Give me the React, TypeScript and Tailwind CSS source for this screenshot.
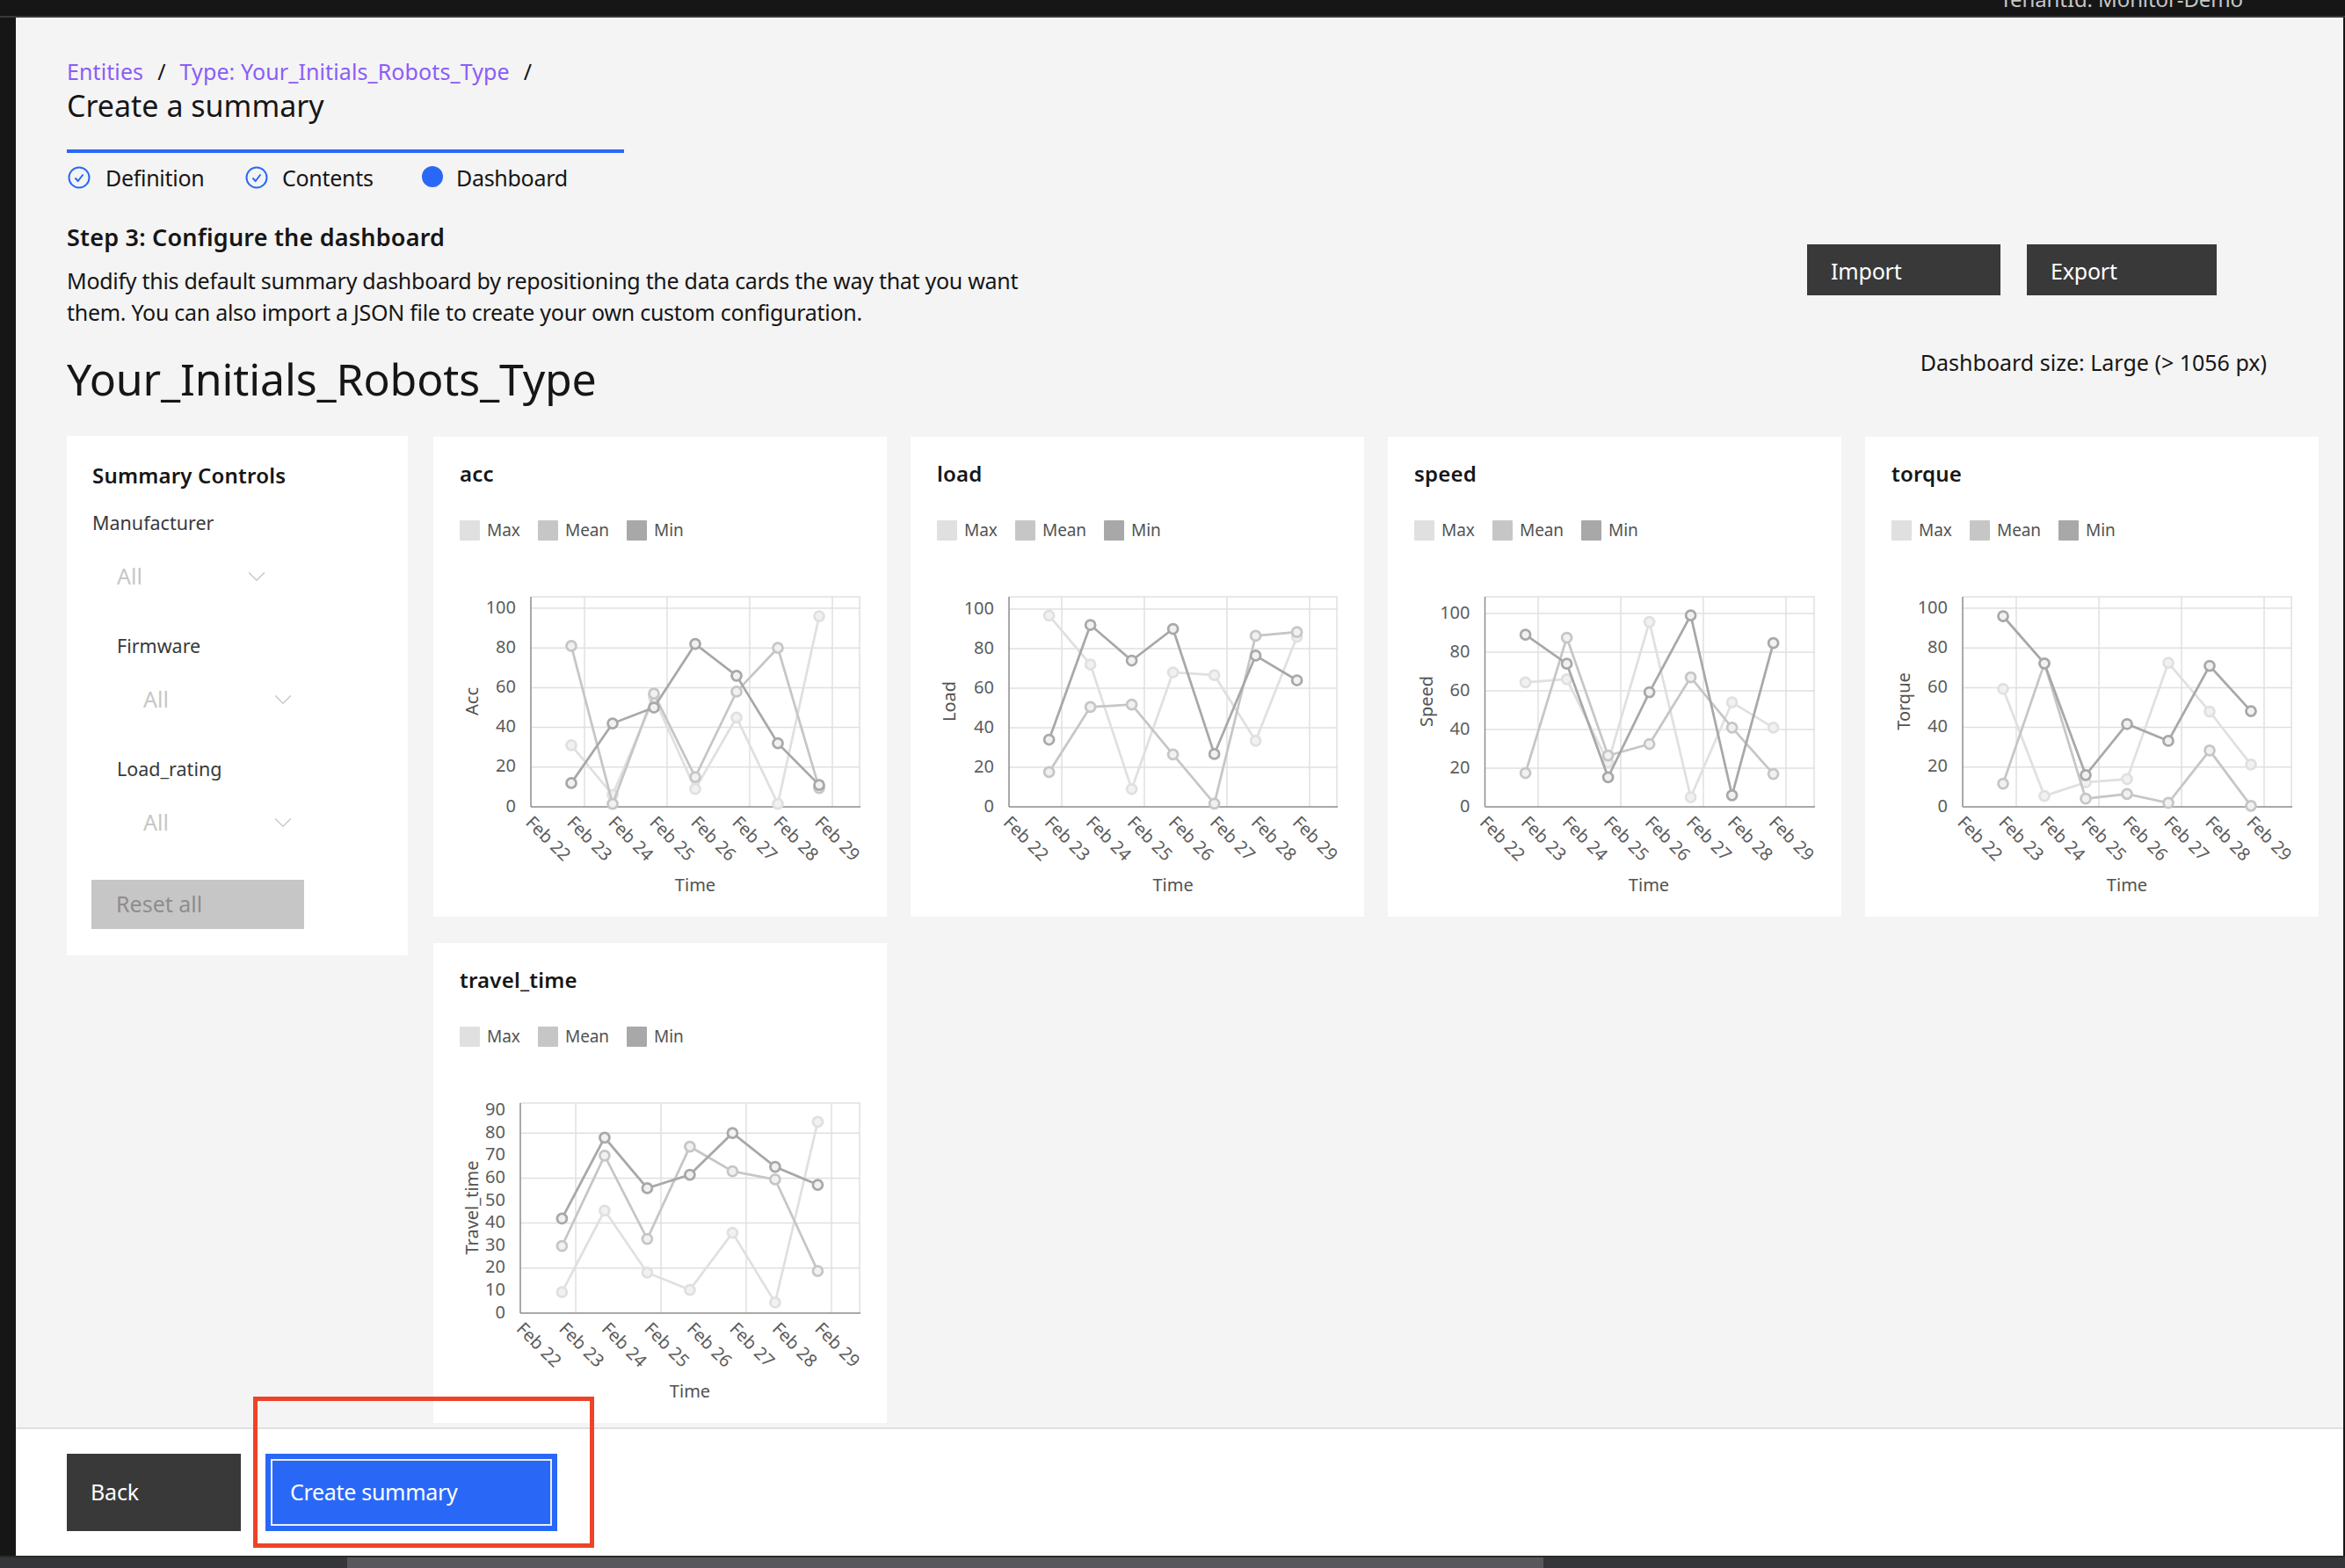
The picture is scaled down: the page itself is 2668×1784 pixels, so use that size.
import React from 'react';
import { ChevronDown } from 'lucide-react';

const DATES = ['Feb 22', 'Feb 23', 'Feb 24', 'Feb 25', 'Feb 26', 'Feb 27', 'Feb 28', 'Feb 29'];
const SERIES_COLORS = ['#e0e0e0', '#c6c6c6', '#a8a8a8'];

interface ChartSpec {
    name: string;
    axis: string;
    left: number;
    y100: number; // pixel row of value 100 (or 90 scale)
    firstX: number;
    stepX: number;
    gridX: number;
    ticks: number[];
    gridTicks: number[];
    timeX: number;
    series: number[][];
}

const BOTTOM = 421;
const RIGHT = 486;
const TOP = 182;

const charts: ChartSpec[] = [
    {
        name: 'acc', axis: 'Acc', left: 111, y100: 195, firstX: 157, stepX: 47, gridX: 172, timeX: 298,
        ticks: [0, 20, 40, 60, 80, 100], gridTicks: [20, 40, 60, 80, 100],
        series: [
            [31, 6, 55, 9, 45, 1.5, 96],
            [81, 1.5, 57, 15, 58, 80, 9.5],
            [12, 42, 50, 82, 66, 32, 11],
        ],
    },
    {
        name: 'load', axis: 'Load', left: 112, y100: 196, firstX: 157.6, stepX: 47, gridX: 172, timeX: 298.6,
        ticks: [0, 20, 40, 60, 80, 100], gridTicks: [20, 40, 60, 80, 100],
        series: [
            [96.7, 72, 9, 68, 66.6, 33.4, 86],
            [17.6, 50.5, 51.7, 26.5, 1.6, 86.5, 88.4],
            [34, 92, 74, 90, 26.7, 76.5, 64],
        ],
    },
    {
        name: 'speed', axis: 'Speed', left: 110.5, y100: 201, firstX: 156.6, stepX: 47, gridX: 171, timeX: 297,
        ticks: [0, 20, 40, 60, 80, 100], gridTicks: [20, 40, 60, 80, 100],
        series: [
            [64.4, 66, 23, 95.6, 5, 54, 41],
            [17.5, 87.5, 26.5, 32.5, 67, 41, 17],
            [89, 74, 15.3, 59.3, 99, 6, 84.7],
        ],
    },
    {
        name: 'torque', axis: 'Torque', left: 111, y100: 195, firstX: 157, stepX: 47, gridX: 172, timeX: 298,
        ticks: [0, 20, 40, 60, 80, 100], gridTicks: [20, 40, 60, 80, 100],
        series: [
            [59.4, 5.5, 12.3, 14, 72.5, 48, 21.3],
            [11.7, 72.2, 4.1, 6.5, 2, 28.4, 0.5],
            [96, 72.2, 16, 41.7, 33.2, 71, 48.2],
        ],
    },
    {
        name: 'travel_time', axis: 'Travel_time', left: 99, y100: 165, firstX: 146.4, stepX: 48.5, gridX: 162, timeX: 292,
        ticks: [0, 10, 20, 30, 40, 50, 60, 70, 80, 90], gridTicks: [20, 40, 60, 80],
        series: [
            [9.3, 45.6, 18, 10.3, 35.7, 4.7, 85],
            [29.8, 70, 33, 74, 63, 59.4, 18.7],
            [42, 78, 55.5, 61.5, 80, 65, 57],
        ],
    },
];

function Chart({ spec }: { spec: ChartSpec }) {
    const perUnit = (BOTTOM - spec.y100) / 100;
    const yOf = (v: number) => BOTTOM - v * perUnit;
    const xOf = (i: number) => spec.firstX + i * spec.stepX;
    const gridXs = [0, 1, 2, 3].map((i) => spec.gridX + i * spec.stepX * 2);

    return (
        <svg width="516" height="546" className="absolute left-0 top-0" fontFamily="'Noto Sans', sans-serif">
            {spec.gridTicks.map((t) => (
                <line key={t} x1={spec.left} x2={RIGHT} y1={yOf(t)} y2={yOf(t)} stroke="#e0e0e0" strokeWidth="1.5" />
            ))}
            {gridXs.map((x) => (
                <line key={x} x1={x} x2={x} y1={TOP} y2={BOTTOM} stroke="#e0e0e0" strokeWidth="1.5" />
            ))}
            <line x1={spec.left} x2={RIGHT} y1={TOP} y2={TOP} stroke="#e0e0e0" strokeWidth="1.5" />
            <line x1={RIGHT - 1} x2={RIGHT - 1} y1={TOP} y2={BOTTOM} stroke="#e0e0e0" strokeWidth="1.5" />
            <line x1={spec.left} x2={spec.left} y1={TOP} y2={BOTTOM} stroke="#8d8d8d" strokeWidth="1.5" />
            <line x1={spec.left} x2={RIGHT} y1={BOTTOM} y2={BOTTOM} stroke="#8d8d8d" strokeWidth="1.5" />

            {spec.ticks.map((t) => (
                <text key={t} x={spec.left - 17} y={yOf(t) + 5.5} textAnchor="end" fontSize="20" fill="#5c5c5c">
                    {t}
                </text>
            ))}
            {DATES.map((d, i) => (
                <text
                    key={d}
                    transform={`translate(${xOf(i) - 53} ${440}) rotate(45)`}
                    fontSize="20"
                    fill="#5c5c5c"
                >
                    {d}
                </text>
            ))}
            <text x={spec.timeX} y={517} textAnchor="middle" fontSize="20" fill="#525252">
                Time
            </text>
            <text
                transform={`translate(${51} ${301}) rotate(-90)`}
                textAnchor="middle"
                fontSize="20"
                fill="#525252"
            >
                {spec.axis}
            </text>

            {spec.series.map((values, s) => (
                <g key={s}>
                    <polyline
                        points={values.map((v, i) => `${xOf(i)},${yOf(v)}`).join(' ')}
                        fill="none"
                        stroke={SERIES_COLORS[s]}
                        strokeWidth="2.75"
                    />
                    {values.map((v, i) => (
                        <circle
                            key={i}
                            cx={xOf(i)}
                            cy={yOf(v)}
                            r="5.5"
                            fill="#f1f1f1"
                            stroke={SERIES_COLORS[s]}
                            strokeWidth="2.75"
                        />
                    ))}
                </g>
            ))}
        </svg>
    );
}

function ChartCard({ spec }: { spec: ChartSpec }) {
    return (
        <div className="relative h-[546px] bg-white pl-[30px] pt-[24px]">
            <h3 className="relative text-[24px] leading-[36px] font-semibold tracking-[0.2px] text-[#161616]">{spec.name}</h3>
            <div className="relative mt-[34px] flex h-[24px] items-center text-[19px] tracking-[-0.1px] text-[#525252]">
                <span className="h-[23px] w-[23px] rounded-[1px] bg-[#e0e0e0]" />
                <span className="ml-[8px] w-[58px]">Max</span>
                <span className="h-[23px] w-[23px] rounded-[1px] bg-[#c6c6c6]" />
                <span className="ml-[8px] w-[70px]">Mean</span>
                <span className="h-[23px] w-[23px] rounded-[1px] bg-[#a8a8a8]" />
                <span className="ml-[8px]">Min</span>
            </div>
            <Chart spec={spec} />
        </div>
    );
}

function CheckStep() {
    return (
        <svg width="26" height="26" viewBox="0 0 26 26" fill="none">
            <circle cx="13" cy="13" r="11.5" stroke="#2968f7" strokeWidth="2" />
            <path d="M8.5 13.5l3.2 3.5 5.8-7.5" stroke="#2968f7" strokeWidth="2" />
        </svg>
    );
}

function Dropdown({ label, indent, valueIndent, first }: { label: string; indent: string; valueIndent: string; first?: boolean }) {
    return (
        <div className={first ? 'mt-[21px]' : 'mt-[46px]'}>
            <div className={`${indent} text-[21.5px] leading-[30px] text-[#393939]`}>{label}</div>
            <div className={`${valueIndent} mt-[28px] flex h-[36px] w-[176px] items-center justify-between text-[25px] text-[#c6c6c6]`}>
                <span>All</span>
                <ChevronDown size={34} strokeWidth={0.9} />
            </div>
        </div>
    );
}

function DarkButton({ label, width }: { label: string; width: string }) {
    return (
        <button className={`${width} h-[58px] bg-[#393939] pl-[27px] pt-[3px] text-left text-[25px] tracking-[-0.2px] text-white`}>
            {label}
        </button>
    );
}

export default function App() {
    return (
        <div className="relative flex h-[1784px] w-[2668px] flex-col overflow-hidden bg-[#161616] font-['Noto_Sans',sans-serif]">
            {/* top bar, the tenant text is cut off by the edge */}
            <header className="flex h-[20px] justify-end overflow-hidden border-b-2 border-[#393939] pr-[116px]">
                <span className="-mt-[19px] text-[24px] leading-[36px] tracking-[-0.1px] text-[#c6c6c6]">TenantId: Monitor-Demo</span>
            </header>

            <div className="flex min-h-0 flex-1 pl-[18px] pr-[2px]">
                <div className="flex min-w-0 flex-1 flex-col">
                    <main className="h-[1604px] overflow-hidden bg-[#f4f4f4] pl-[58px]">
                        <div className="flex h-[476px] justify-between">
                            <div className="pt-[44px]">
                                <nav className="flex h-[36px] items-center text-[25px] tracking-[0.1px] text-[#8b5cf6]">
                                    <span>Entities</span>
                                    <span className="mx-[16px] text-[#161616]">/</span>
                                    <span>Type: Your_Initials_Robots_Type</span>
                                    <span className="mx-[16px] text-[#161616]">/</span>
                                </nav>
                                <h1 className="text-[34px] leading-[40px] text-[#161616]">Create a summary</h1>

                                <div className="mt-[30px] h-[4px] w-[634px] bg-[#2968f7]" />
                                <div className="flex h-[56px] items-center text-[25px] tracking-[-0.3px] text-[#161616]">
                                    <div className="flex w-[203px] items-center">
                                        <span className="ml-[1px]"><CheckStep /></span>
                                        <span className="ml-[17px] pt-[2px]">Definition</span>
                                    </div>
                                    <div className="flex w-[201px] items-center">
                                        <CheckStep />
                                        <span className="ml-[16px] pt-[2px]">Contents</span>
                                    </div>
                                    <div className="flex items-center">
                                        <span className="-mt-[2px] h-[24px] w-[24px] rounded-full bg-[#2968f7]" />
                                        <span className="ml-[15px] pt-[2px]">Dashboard</span>
                                    </div>
                                </div>

                                <h2 className="mt-[20px] text-[27px] leading-[40px] font-semibold tracking-[0.2px] text-[#161616]">
                                    Step 3: Configure the dashboard
                                </h2>
                                <p className="mt-[11px] w-[1120px] text-[25px] leading-[36px] tracking-[-0.28px] text-[#161616]">
                                    Modify this default summary dashboard by repositioning the data cards the way that you want
                                    <br />
                                    them. You can also import a JSON file to create your own custom configuration.
                                </p>
                                <h1 className="mt-[26px] text-[50px] leading-[64px] tracking-[-0.15px] text-[#161616]">Your_Initials_Robots_Type</h1>
                            </div>

                            <div className="mr-[87px] w-[523px] shrink-0 pt-[258px]">
                                <div className="flex gap-[30px]">
                                    <DarkButton label="Import" width="w-[220px]" />
                                    <DarkButton label="Export" width="w-[216px]" />
                                </div>
                                <div className="mt-[58px] text-right text-[25px] leading-[36px] text-[#161616]">
                                    Dashboard size: Large (&gt; 1056 px)
                                </div>
                            </div>
                        </div>

                        <div className="flex items-start">
                            <aside className="mr-[29px] w-[388px] shrink-0 bg-white pb-[30px] pl-[28px] pt-[27px]">
                                <h3 className="pl-[1px] text-[24px] leading-[36px] font-semibold tracking-[0.2px] text-[#161616]">Summary Controls</h3>
                                <Dropdown first label="Manufacturer" indent="pl-[1px]" valueIndent="ml-[29px]" />
                                <Dropdown label="Firmware" indent="pl-[29px]" valueIndent="ml-[59px]" />
                                <Dropdown label="Load_rating" indent="pl-[29px]" valueIndent="ml-[59px]" />
                                <button className="mt-[47px] h-[56px] w-[242px] bg-[#c6c6c6] pl-[28px] text-left text-[25px] text-[#8d8d8d]">
                                    Reset all
                                </button>
                            </aside>
                            <div className="grid grid-cols-[repeat(4,516px)] gap-x-[27px] gap-y-[30px] pt-[1px]">
                                {charts.map((c) => (
                                    <ChartCard key={c.name} spec={c} />
                                ))}
                            </div>
                        </div>
                    </main>

                    <footer className="flex h-[146px] gap-[28px] border-t-2 border-[#e0e0e0] bg-white pl-[58px] pt-[28px]">
                        <button className="h-[88px] w-[198px] bg-[#393939] pl-[27px] text-left text-[25px] tracking-[-0.2px] text-white">Back</button>
                        <button className="h-[88px] w-[332px] bg-[#2968f7] p-[6px] text-left text-[25px] tracking-[-0.3px] text-white">
                            <span className="flex h-full w-full items-center border-2 border-[#e8edf8] pl-[20px]">Create summary</span>
                        </button>
                    </footer>
                </div>
            </div>

            {/* horizontal scrollbar */}
            <div className="flex h-[14px] border-t-2 border-[#2a2a2a] bg-[#35363a]">
                <div className="ml-[395px] w-[1361px] bg-[#58585c]" />
            </div>

            {/* red annotation box drawn on top of the screenshot */}
            <div className="absolute left-[288px] top-[1589px] h-[172px] w-[388px] border-[5px] border-[#ee4328]" />
        </div>
    );
}
